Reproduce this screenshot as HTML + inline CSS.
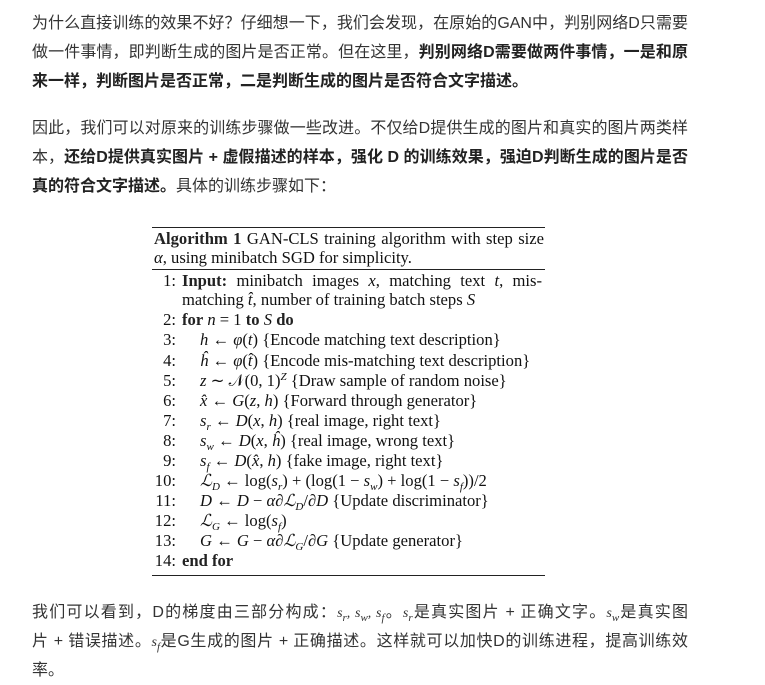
<!DOCTYPE html>
<html><head><meta charset="utf-8">
<style>
body{margin:0;background:#fff;width:765px;height:681px;position:relative;overflow:hidden;font-family:"Liberation Sans","Noto Sans CJK SC",sans-serif;color:#333;font-size:16px}
.l{position:absolute;left:32px;width:656px;height:29px;line-height:29px;white-space:nowrap}
.j{text-align:justify;text-align-last:justify}
b{color:#222}
.alg{position:absolute;left:152px;top:227px;width:393px;height:352px;font-family:"Liberation Serif",serif;font-size:16.6px;color:#111}
.alg .r{position:absolute;left:0;width:393px;border-top:1.5px solid #222}
.alg .t{position:absolute;white-space:nowrap;line-height:20px;height:20px}
sub,sup{font-size:11px;line-height:0;position:relative;vertical-align:baseline}
sub{top:4px}
sup{top:-6px}
.n{position:absolute;width:24px;text-align:right;left:0}
.c{position:absolute;left:48px}
i{font-style:italic}
.m{font-family:"Liberation Serif",serif;font-style:italic;font-size:14px}
</style></head><body>
<div class="l j" style="top:9px">为什么直接训练的效果不好？仔细想一下，我们会发现，在原始的GAN中，判别网络D只需要</div>
<div class="l j" style="top:38px">做一件事情，即判断生成的图片是否正常。但在这里，<b>判别网络D需要做两件事情，一是和原</b></div>
<div class="l" style="top:67px"><b>来一样，判断图片是否正常，二是判断生成的图片是否符合文字描述。</b></div>
<div class="l j" style="top:114px">因此，我们可以对原来的训练步骤做一些改进。不仅给D提供生成的图片和真实的图片两类样</div>
<div class="l j" style="top:143px">本，<b>还给D提供真实图片 + 虚假描述的样本，强化 D 的训练效果，强迫D判断生成的图片是否</b></div>
<div class="l" style="top:172px"><b>真的符合文字描述。</b>具体的训练步骤如下：</div>

<div class="alg">
<div class="r" style="top:0"></div>
<div class="t" style="top:2px;left:2px;width:390px;text-align:justify;text-align-last:justify"><b>Algorithm 1</b> GAN-CLS training algorithm with step size</div>
<div class="t" style="top:21px;left:2px"><i>α</i>, using minibatch SGD for simplicity.</div>
<div class="r" style="top:42px"></div>
<div class="t" style="top:44px;left:0;width:390px"><span class="n">1:</span><span style="position:absolute;left:30px;width:360px;text-align:justify;text-align-last:justify"><b>Input:</b> minibatch images <i>x</i>, matching text <i>t</i>, mis-</span></div>
<div class="t" style="top:63px;left:30px">matching <i>t̂</i>, number of training batch steps <i>S</i></div>
<div class="t" style="top:83px;left:0"><span class="n">2:</span><span style="position:absolute;left:30px"><b>for</b> <i>n</i> = 1 <b>to</b> <i>S</i> <b>do</b></span></div>
<div class="t" style="top:103px;left:0"><span class="n">3:</span><span class="c"><i>h</i> ← <i>φ</i>(<i>t</i>) {Encode matching text description}</span></div>
<div class="t" style="top:124px;left:0"><span class="n">4:</span><span class="c"><i>ĥ</i> ← <i>φ</i>(<i>t̂</i>) {Encode mis-matching text description}</span></div>
<div class="t" style="top:144px;left:0"><span class="n">5:</span><span class="c"><i>z</i> ∼ 𝒩(0, 1)<sup><i>Z</i></sup> {Draw sample of random noise}</span></div>
<div class="t" style="top:164px;left:0"><span class="n">6:</span><span class="c"><i>x̂</i> ← <i>G</i>(<i>z</i>, <i>h</i>) {Forward through generator}</span></div>
<div class="t" style="top:184px;left:0"><span class="n">7:</span><span class="c"><i>s<sub>r</sub></i> ← <i>D</i>(<i>x</i>, <i>h</i>) {real image, right text}</span></div>
<div class="t" style="top:204px;left:0"><span class="n">8:</span><span class="c"><i>s<sub>w</sub></i> ← <i>D</i>(<i>x</i>, <i>ĥ</i>) {real image, wrong text}</span></div>
<div class="t" style="top:224px;left:0"><span class="n">9:</span><span class="c"><i>s<sub>f</sub></i> ← <i>D</i>(<i>x̂</i>, <i>h</i>) {fake image, right text}</span></div>
<div class="t" style="top:244px;left:0"><span class="n">10:</span><span class="c"><i>ℒ<sub>D</sub></i> ← log(<i>s<sub>r</sub></i>) + (log(1 − <i>s<sub>w</sub></i>) + log(1 − <i>s<sub>f</sub></i>))/2</span></div>
<div class="t" style="top:264px;left:0"><span class="n">11:</span><span class="c"><i>D</i> ← <i>D</i> − <i>α</i>∂<i>ℒ<sub>D</sub></i>/∂<i>D</i> {Update discriminator}</span></div>
<div class="t" style="top:284px;left:0"><span class="n">12:</span><span class="c"><i>ℒ<sub>G</sub></i> ← log(<i>s<sub>f</sub></i>)</span></div>
<div class="t" style="top:304px;left:0"><span class="n">13:</span><span class="c"><i>G</i> ← <i>G</i> − <i>α</i>∂<i>ℒ<sub>G</sub></i>/∂<i>G</i> {Update generator}</span></div>
<div class="t" style="top:324px;left:0"><span class="n">14:</span><span style="position:absolute;left:30px"><b>end for</b></span></div>
<div class="r" style="top:348px"></div>
</div>

<div class="l j" style="top:598px">我们可以看到，D的梯度由三部分构成：<span class="m">s<sub>r</sub>, s<sub>w</sub>, s<sub>f</sub></span>。<span class="m">s<sub>r</sub></span>是真实图片 + 正确文字。<span class="m">s<sub>w</sub></span>是真实图</div>
<div class="l j" style="top:627px">片 + 错误描述。<span class="m">s<sub>f</sub></span>是G生成的图片 + 正确描述。这样就可以加快D的训练进程，提高训练效</div>
<div class="l" style="top:656px">率。</div>
</body></html>
